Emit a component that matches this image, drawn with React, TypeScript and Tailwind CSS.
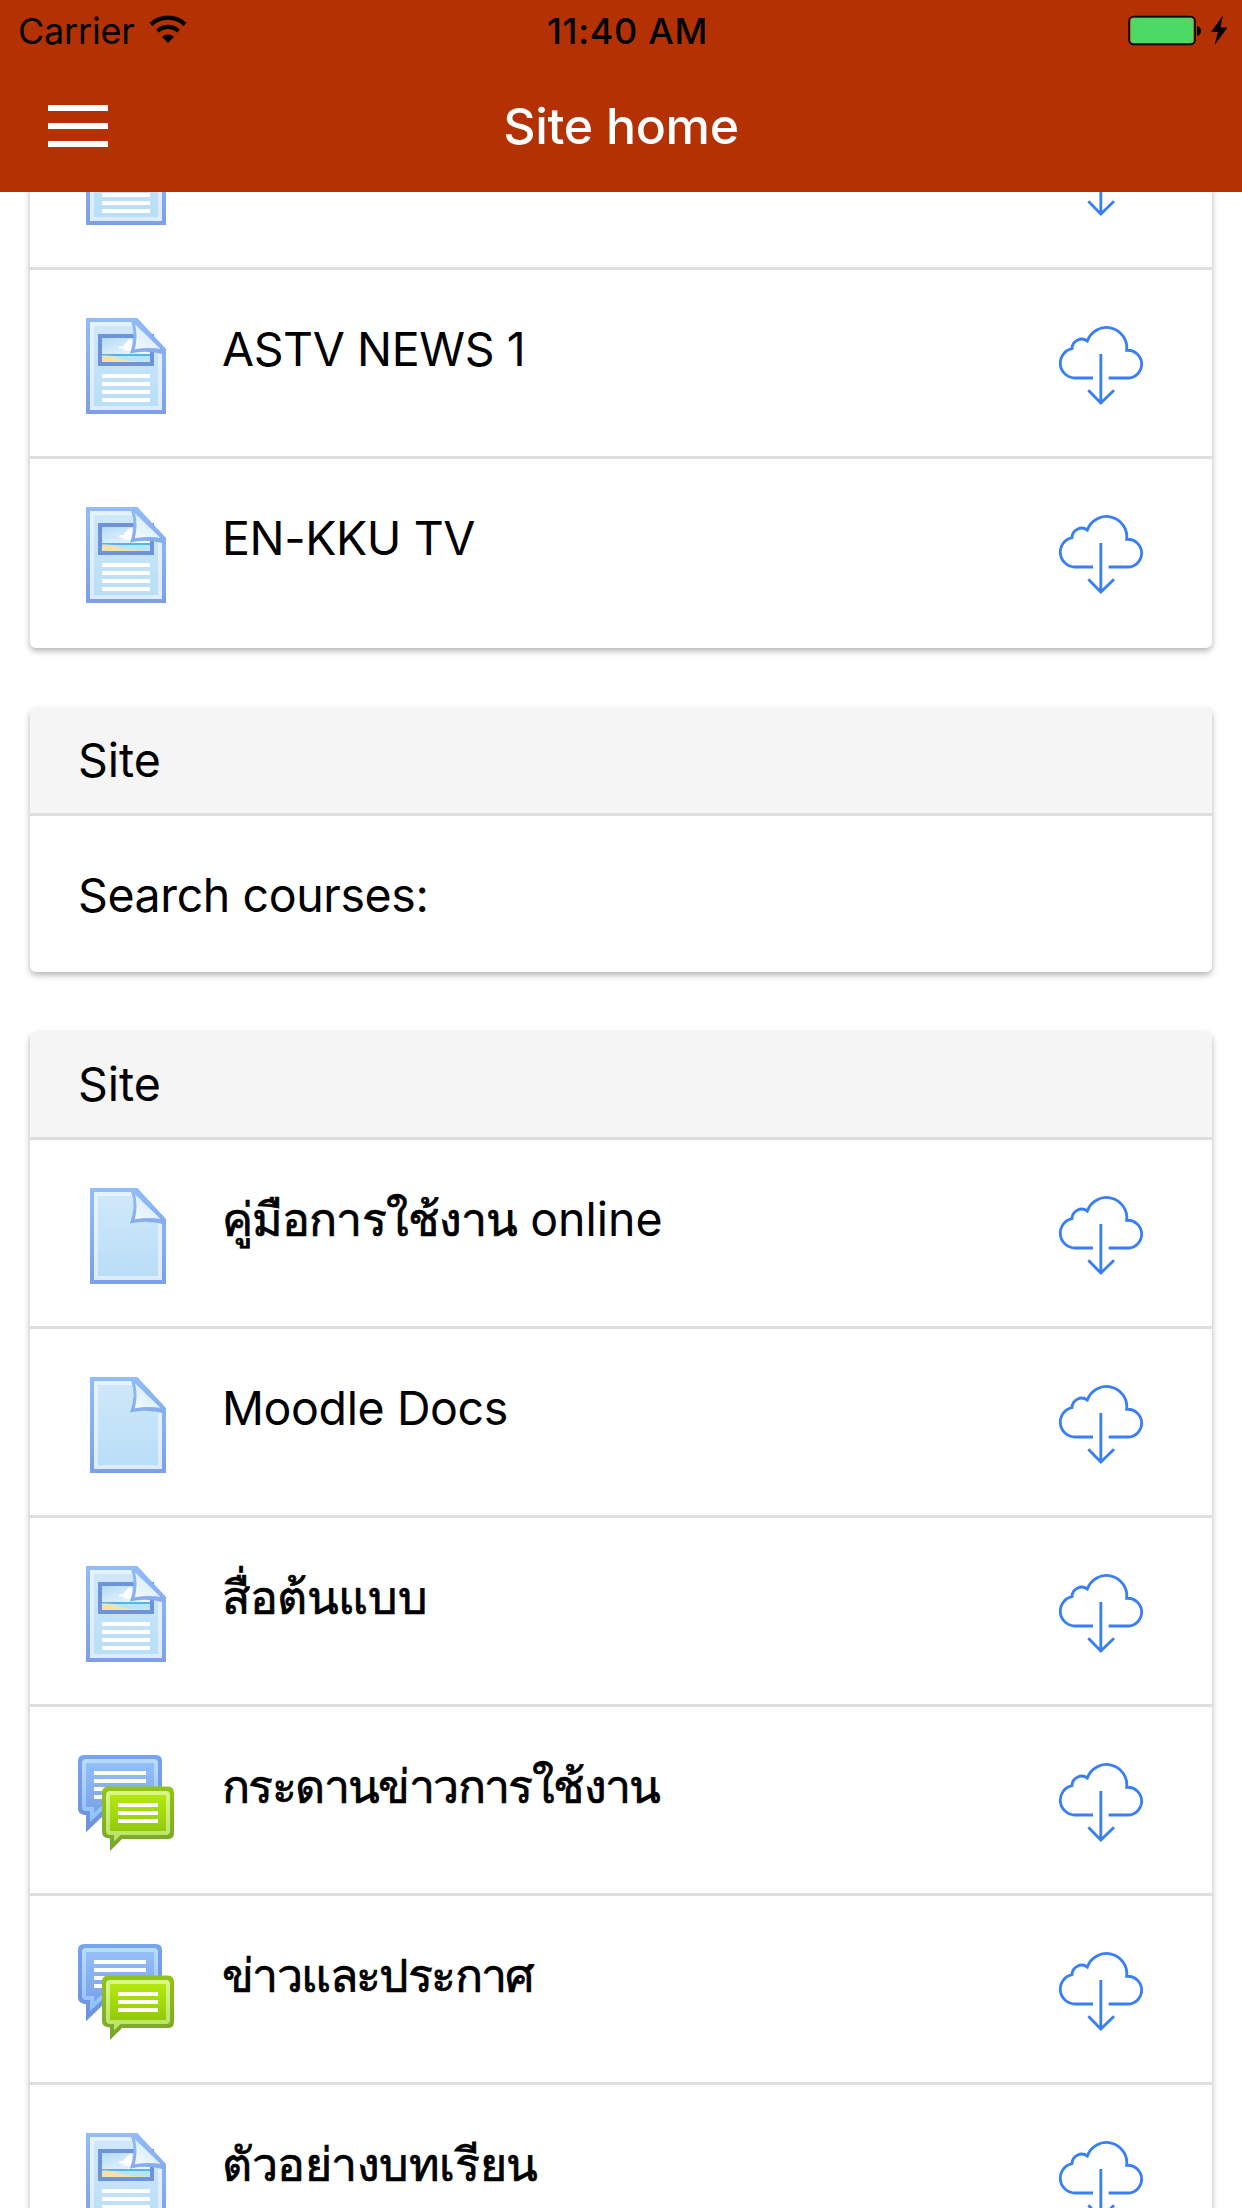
import clsx from 'clsx';

type IconKind = 'page' | 'file' | 'forum';

interface Activity {
  name: string;
  icon: IconKind;
  // Thai names are set slightly heavier, each with its own tracking
  thai?: string;
  suffix?: string;
}

const CHANNELS: Activity[] = [
  { name: 'ASTV NEWS 1', icon: 'page' },
  { name: 'EN-KKU TV', icon: 'page' },
];

const SITE_ITEMS: Activity[] = [
  { name: 'คู่มือการใช้งาน', icon: 'file', thai: 'tracking-[-0.9px]', suffix: ' online' },
  { name: 'Moodle Docs', icon: 'file' },
  { name: 'สื่อต้นแบบ', icon: 'page', thai: 'tracking-[-0.4px]' },
  { name: 'กระดานข่าวการใช้งาน', icon: 'forum', thai: 'tracking-[-1.6px]' },
  { name: 'ข่าวและประกาศ', icon: 'forum', thai: 'tracking-[-1.6px]' },
  { name: 'ตัวอย่างบทเรียน', icon: 'page', thai: 'tracking-[-0.45px]' },
];

function Gradients() {
  return (
    <svg className="absolute h-0 w-0" aria-hidden="true">
      <defs>
        <linearGradient id="edge" x1="0" y1="0" x2="0" y2="1">
          <stop offset="0" stopColor="#92bdf8" />
          <stop offset="1" stopColor="#7c9fe8" />
        </linearGradient>
        <linearGradient id="corner" x1="0" y1="0" x2="0" y2="1">
          <stop offset="0" stopColor="#92bdf8" />
          <stop offset="1" stopColor="#86abee" />
        </linearGradient>
        <linearGradient id="paper" x1="0" y1="0" x2="0" y2="1">
          <stop offset="0" stopColor="#cfe8f9" />
          <stop offset="1" stopColor="#b9def7" />
        </linearGradient>
        <linearGradient id="rim" x1="0" y1="0" x2="0" y2="1">
          <stop offset="0" stopColor="#e5f3fc" />
          <stop offset="1" stopColor="#dcecfb" />
        </linearGradient>
        <linearGradient id="fold" x1="0" y1="1" x2="1" y2="0">
          <stop offset="0" stopColor="#f4fafe" />
          <stop offset="1" stopColor="#c9e6fa" />
        </linearGradient>
        <linearGradient id="sky" x1="1" y1="1" x2="0" y2="0">
          <stop offset="0" stopColor="#f2f9fe" />
          <stop offset="1" stopColor="#b4dcf8" />
        </linearGradient>
        <linearGradient id="blueEdge" x1="0" y1="0" x2="0" y2="1">
          <stop offset="0" stopColor="#76a4f0" />
          <stop offset="1" stopColor="#6c92da" />
        </linearGradient>
        <linearGradient id="blueRim" x1="0" y1="0" x2="0" y2="1">
          <stop offset="0" stopColor="#b8dcf9" />
          <stop offset="1" stopColor="#8fc0fb" />
        </linearGradient>
        <linearGradient id="blueFill" x1="0" y1="0" x2="0" y2="1">
          <stop offset="0" stopColor="#94bff8" />
          <stop offset="1" stopColor="#7ba0e8" />
        </linearGradient>
        <linearGradient id="greenEdge" x1="0" y1="0" x2="0" y2="1">
          <stop offset="0" stopColor="#91c514" />
          <stop offset="1" stopColor="#76a52f" />
        </linearGradient>
        <linearGradient id="greenRim" x1="0" y1="0" x2="0" y2="1">
          <stop offset="0" stopColor="#d9f788" />
          <stop offset="1" stopColor="#b9e35f" />
        </linearGradient>
        <linearGradient id="greenFill" x1="0" y1="0" x2="0" y2="1">
          <stop offset="0" stopColor="#b3e810" />
          <stop offset="1" stopColor="#92ca0c" />
        </linearGradient>
      </defs>
    </svg>
  );
}

function FoldedCorner() {
  return (
    <>
      <path d="M12.500 0H14.800L22 7.800V9.200Q17 7.900 13 8.900Q14.600 4.500 13.300 1Z" fill="url(#corner)" />
      <path d="M14.300 1.600L20.600 7.700Q17.500 7.200 14.200 7.800Q15 4.800 14.300 1.600Z" fill="url(#fold)" />
    </>
  );
}

function FileIcon() {
  return (
    <svg viewBox="0 0 24 24" className="h-24 w-24">
      <path d="M3 0H14.800L22 7.800V24H3Z" fill="url(#edge)" />
      <path d="M4 1H14L21 8.500V23H4Z" fill="url(#rim)" />
      <path d="M5 2H13.600L14 8.500H20V22H5Z" fill="url(#paper)" />
      <FoldedCorner />
    </svg>
  );
}

function PageIcon() {
  return (
    <svg viewBox="0 0 24 24" className="h-24 w-24">
      <path d="M2 0H14.800L22 7.800V24H2Z" fill="url(#edge)" />
      <path d="M3 1H14L21 8.500V23H3Z" fill="url(#rim)" />
      <path d="M4 2H13.600L14 8.500H20V22H4Z" fill="url(#paper)" />
      <path d="M5 4H19V12H5Z" fill="#6c93dc" />
      <path d="M6 5H18V9H6Z" fill="url(#sky)" />
      <path d="M10.200 7.300Q10.600 6.700 11.500 7.100Q11.400 6.200 12.200 6.100Q12.300 5.200 13.500 5.300V8.200H12Q11.400 8.200 11.300 7.600Q10.500 7.800 10.200 7.300Z" fill="#fff" />
      <path d="M6 9H18V9.600H6Z" fill="#55b5e8" />
      <path d="M6 9.500H18V11H6Z" fill="#b4e7f6" />
      <path d="M6 9.400Q9 9.200 10.500 10.200Q12 10.800 18 10.900V11H6Z" fill="#f6e0ad" />
      <path d="M6 14h12v1H6ZM6 16h12v1H6ZM6 18h12v1H6ZM6 20h12v1H6Z" fill="#fff" />
      <FoldedCorner />
    </svg>
  );
}

function ForumIcon() {
  return (
    <svg viewBox="0 0 24 24" className="h-24 w-24">
      <path d="M1.500 0H19.500Q21 0 21 1.500V13.500Q21 15 19.500 15H6.500L2 19.300V15H1.500Q0 14.600 0 13.500V1.500Q0 0 1.500 0Z" fill="url(#blueEdge)" />
      <path d="M2 1H19Q20 1 20 2V14H6L3 16.800V14H2Q1 14 1 13V2Q1 1 2 1Z" fill="url(#blueRim)" />
      <path d="M2 2H19V13H5.500L4 14.500V13H2Z" fill="url(#blueFill)" />
      <path d="M4 4h13v1H4ZM4 6h13v1H4ZM4 8h13v1H4ZM4 10h13v1H4Z" fill="#fff" />
      <path d="M7.500 7.900H22.500Q24 8 24 9.500V19.500Q24 21 22.500 21H11L8 24V20.900Q6 20.800 6 19.300V9.500Q6 8 7.500 7.900Z" fill="url(#greenEdge)" />
      <path d="M8 9H22Q23 9 23 10V19Q23 20 22 20H10.600L9 21.600V20H8Q7 20 7 19V10Q7 9 8 9Z" fill="url(#greenRim)" />
      <path d="M8 10H22V19H8Z" fill="url(#greenFill)" />
      <path d="M10 12h10v1H10ZM10 14h10v1H10ZM10 16h10v1H10Z" fill="#fff" />
    </svg>
  );
}

function ActivityIcon({ kind }: { kind: IconKind }) {
  if (kind === 'page') return <PageIcon />;
  if (kind === 'file') return <FileIcon />;
  return <ForumIcon />;
}

function CloudDownload() {
  return (
    <svg viewBox="84 72 258 246" className="h-[82px] w-[86px]" fill="none" stroke="#387ef5" strokeWidth="8.5">
      <path d="M189 234H136A44.500 44.500 0 0 1 126 146A29 29 0 0 1 172 123A61 61 0 0 1 290 151A42 42 0 0 1 335 193A42 42 0 0 1 294 234H236" />
      <path d="M212.500 162V308M175 271L212.500 309L252 271" />
    </svg>
  );
}

function StatusBar() {
  return (
    <div className="grid h-15 grid-cols-3 text-[36px] leading-[62px] text-black">
      <div className="flex pl-[18px]">
        <span className="tracking-[-0.2px]">Carrier</span>
        <svg viewBox="0 0 38 28" className="mt-[15px] ml-[14px] h-7 w-[38px]">
          <path d="M2 9.500A24.500 24.500 0 0 1 36 9.500M8.500 16A15.200 15.200 0 0 1 29.500 16" fill="none" stroke="#000" strokeWidth="4.200" />
          <path d="M13 22A8.600 8.600 0 0 1 25 22L19 28Z" />
        </svg>
      </div>
      <div className="pl-[13px] text-center font-medium tracking-[0.7px]">11:40 AM</div>
      <div className="flex justify-end">
        <svg viewBox="0 0 102 32" className="mt-[14px] mr-[12px] h-8 w-[102px]">
          <rect x="1" y="2.500" width="66" height="28" rx="4.500" fill="none" stroke="#000" strokeWidth="1.500" />
          <rect x="2.500" y="4" width="63" height="25" rx="3" fill="#4cd964" />
          <path d="M69 12Q73 13 73 17T69 22Z" />
          <path d="M95 1.500L83 18H90L86.500 31L99.500 13.500H92.500Z" />
        </svg>
      </div>
    </div>
  );
}

function NavBar() {
  return (
    <div className="grid h-33 grid-cols-[200px_1fr_200px] items-center">
      <button className="ml-12 flex w-15 flex-col gap-3" aria-label="Menu">
        <span className="h-1.5 w-full bg-white" />
        <span className="h-1.5 w-full bg-white" />
        <span className="h-1.5 w-full bg-white" />
      </button>
      <h1 className="text-center text-[50px] font-medium tracking-[-0.3px] text-white">Site home</h1>
    </div>
  );
}

function ActivityRow({ item, last }: { item: Activity; last?: boolean }) {
  return (
    <li className={clsx('flex h-[189px] items-start pr-[68px] pl-12', !last && 'border-b-3 border-[#dedede]')}>
      <div className="pt-12">
        <ActivityIcon kind={item.icon} />
      </div>
      <div className="ml-12 flex-1 pt-[47px] leading-[64px]">
        <span className={clsx(item.thai, item.thai && '[-webkit-text-stroke:0.7px_black]')}>{item.name}</span>
        {item.suffix && <span className="tracking-normal">{item.suffix}</span>}
      </div>
      <div className="pt-[54px]">
        <CloudDownload />
      </div>
    </li>
  );
}

function Card({ title, children }: { title?: string; children: React.ReactNode }) {
  return (
    <section className="overflow-hidden rounded-md bg-white shadow-[0_3px_6px_rgba(0,0,0,0.3)]">
      {title && (
        <h2 className="h-[108px] border-b-3 border-[#dedede] bg-[#f5f5f5] pl-12 leading-[104px] tracking-normal">{title}</h2>
      )}
      {children}
    </section>
  );
}

export default function App() {
  return (
    <div className="flex h-[2208px] w-[1242px] flex-col overflow-hidden bg-white font-['Inter',sans-serif] text-[46.5px] tracking-[-0.4px] text-black">
      <Gradients />
      <header className="z-10 h-48 shrink-0 bg-[#b43104] tracking-normal">
        <StatusBar />
        <NavBar />
      </header>
      <main className="-mt-[111px] flex flex-col gap-15 px-[30px]">
        <Card>
          <ul>
            <ActivityRow item={{ name: '', icon: 'page' }} />
            {CHANNELS.map((item, i) => (
              <ActivityRow key={item.name} item={item} last={i === CHANNELS.length - 1} />
            ))}
          </ul>
        </Card>
        <Card title="Site">
          <p className="h-[156px] pl-12 leading-[158px]">Search courses:</p>
        </Card>
        <Card title="Site">
          <ul>
            {SITE_ITEMS.map((item) => (
              <ActivityRow key={item.name} item={item} />
            ))}
          </ul>
        </Card>
      </main>
    </div>
  );
}
